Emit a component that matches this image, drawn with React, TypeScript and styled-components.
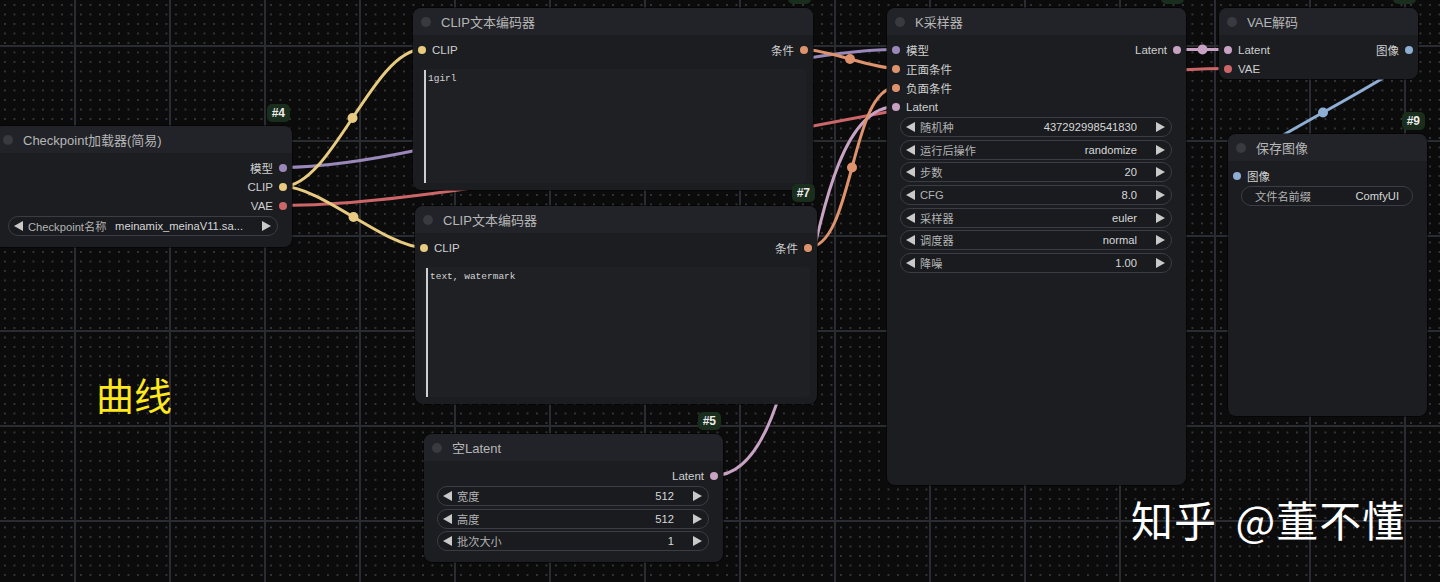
import React from 'react';
import styled, { createGlobalStyle } from 'styled-components';

const Global = createGlobalStyle`
  html, body { margin: 0; padding: 0; background: #0b0b0b; }
  body {
    width: 1440px; height: 582px; overflow: hidden;
    font-family: "Liberation Sans", Arial, "Noto Sans CJK SC", sans-serif;
    -webkit-font-smoothing: antialiased;
  }
`;

const C = {
  clip: '#e8cb80',
  model: '#9a88bb',
  vae: '#cc6668',
  cond: '#df936d',
  latent: '#c8a2c3',
  image: '#8eaed3',
};

const TITLE_H = 27;
const BODY_PAD = 5;
const ROW_H = 19;

const Canvas = styled.div`
  position: relative;
  width: 1440px;
  height: 582px;
  overflow: hidden;
  background-color: #0b0b0b;
  background-image:
    linear-gradient(to right, #2a2c31 0, #2a2c31 2px, transparent 2px),
    linear-gradient(to bottom, #2a2c31 0, #2a2c31 2px, transparent 2px),
    radial-gradient(circle at 1px 1px, #34353a 0.8px, transparent 1.3px);
  background-size: 95px 95px, 95px 95px, 9.5px 9.5px;
  background-position: 74px 0, 0 45px, 4px 4px;
`;

const LinkLayer = styled.svg`
  position: absolute;
  left: 0;
  top: 0;
  width: 1440px;
  height: 582px;
`;

const NodeBox = styled.div<{ $x: number; $y: number; $w: number; $h: number }>`
  position: absolute;
  left: ${(p) => p.$x}px;
  top: ${(p) => p.$y}px;
  width: ${(p) => p.$w}px;
  height: ${(p) => p.$h}px;
  background: #1b1d21;
  border-radius: 8px;
  display: flex;
  flex-direction: column;
  box-shadow: 0 0 0 1px rgba(0, 0, 0, 0.5);
`;

const Badge = styled.div`
  position: absolute;
  right: 2px;
  bottom: calc(100% + 4px);
  height: 18px;
  padding: 0 5px;
  border-radius: 5px;
  background: #1a2e1d;
  color: #ececec;
  font-size: 12px;
  font-weight: bold;
  display: flex;
  align-items: center;
`;

const TitleBar = styled.div`
  flex: none;
  height: ${TITLE_H}px;
  display: flex;
  align-items: center;
  padding-left: 8px;
  gap: 10px;
  background: #212328;
  border-radius: 8px 8px 0 0;
  color: #b6b6b6;
  font-size: 13px;
  white-space: nowrap;
`;

const TitleDot = styled.span`
  width: 10px;
  height: 10px;
  border-radius: 50%;
  background: #383a40;
  flex: none;
`;

const Body = styled.div`
  flex: 1;
  display: flex;
  flex-direction: column;
  padding-top: ${BODY_PAD}px;
  min-height: 0;
`;

const SlotRow = styled.div`
  height: ${ROW_H}px;
  display: flex;
  align-items: center;
  justify-content: space-between;
  padding: 0 5px;
  font-size: 11.5px;
  color: #cfcfcf;
  white-space: nowrap;
`;

const SlotSide = styled.div<{ $out?: boolean }>`
  display: flex;
  align-items: center;
  gap: 6px;
  flex-direction: ${(p) => (p.$out ? 'row-reverse' : 'row')};
`;

const SlotDot = styled.span<{ $c: string }>`
  width: 8px;
  height: 8px;
  border-radius: 50%;
  background: ${(p) => p.$c};
  flex: none;
`;

const Widgets = styled.div`
  display: flex;
  flex-direction: column;
  gap: 2.7px;
  margin-top: 1px;
`;

const Widget = styled.div<{ $plain?: boolean }>`
  height: 20px;
  box-sizing: border-box;
  margin: 0 14px 0 13px;
  border: 1px solid #3a3d43;
  border-radius: 10px;
  background: #191b1f;
  display: flex;
  align-items: center;
  padding: ${(p) => (p.$plain ? '0 13px' : '0 6px 0 5px')};
  font-size: 11.2px;
  white-space: nowrap;
`;

const WLabel = styled.span<{ $plain?: boolean }>`
  color: #b4b4b4;
  margin-left: ${(p) => (p.$plain ? '0' : '5px')};
  flex: none;
`;

const WValue = styled.span<{ $plain?: boolean }>`
  color: #d8d8d8;
  flex: 1;
  text-align: right;
  margin-right: ${(p) => (p.$plain ? '0' : '19px')};
  margin-left: 6px;
`;

const TextArea = styled.div`
  flex: 1;
  margin: 10px 7px 7px 8px;
  background: #1e2024;
  border-radius: 3px;
  display: flex;
  padding: 1px 0 0 3px;
  font-family: "Liberation Mono", "DejaVu Sans Mono", monospace;
  font-size: 9.5px;
  color: #d2d2d2;
`;

const Caret = styled.span`
  width: 2px;
  background: #cfcfcf;
  flex: none;
  margin-right: 2px;
`;

const AreaText = styled.span`
  padding-top: 3px;
`;

const Note = styled.div`
  position: absolute;
  left: 96px;
  top: 375px;
  font-family: "Noto Sans CJK SC", sans-serif;
  font-size: 38px;
  line-height: 1;
  color: #ffe81c;
`;

const Watermark = styled.div`
  position: absolute;
  left: 1131px;
  top: 498px;
  font-family: "Noto Sans CJK SC", sans-serif;
  font-size: 42px;
  font-weight: 400;
  letter-spacing: 1px;
  word-spacing: 8px;
  line-height: 1;
  color: #ffffff;
  white-space: nowrap;
`;

const Tri = ({ dir }: { dir: 'l' | 'r' }) => (
  <svg width="9" height="10" viewBox="0 0 9 10" style={{ flex: 'none' }}>
    <path d={dir === 'l' ? 'M9 0 L0 5 L9 10 Z' : 'M0 0 L9 5 L0 10 Z'} fill="#c9c9c9" />
  </svg>
);

type Slot = [string, string];
type Row = { in?: Slot; out?: Slot };
type W = { label: string; value: string; plain?: boolean };
type NodeDef = {
  id: number;
  title: string;
  x: number;
  y: number;
  w: number;
  h: number;
  rows: Row[];
  widgets?: W[];
  text?: string;
};

const nodes: NodeDef[] = [
  {
    id: 4,
    title: 'Checkpoint加载器(简易)',
    x: -5, y: 126, w: 297, h: 121,
    rows: [{ out: ['模型', C.model] }, { out: ['CLIP', C.clip] }, { out: ['VAE', C.vae] }],
    widgets: [{ label: 'Checkpoint名称', value: 'meinamix_meinaV11.sa...' }],
  },
  {
    id: 6,
    title: 'CLIP文本编码器',
    x: 413, y: 8, w: 400, h: 182,
    rows: [{ in: ['CLIP', C.clip], out: ['条件', C.cond] }],
    text: '1girl',
  },
  {
    id: 7,
    title: 'CLIP文本编码器',
    x: 415, y: 206, w: 402, h: 198,
    rows: [{ in: ['CLIP', C.clip], out: ['条件', C.cond] }],
    text: 'text, watermark',
  },
  {
    id: 5,
    title: '空Latent',
    x: 424, y: 434, w: 299, h: 128,
    rows: [{ out: ['Latent', C.latent] }],
    widgets: [
      { label: '宽度', value: '512' },
      { label: '高度', value: '512' },
      { label: '批次大小', value: '1' },
    ],
  },
  {
    id: 3,
    title: 'K采样器',
    x: 887, y: 8, w: 299, h: 477,
    rows: [
      { in: ['模型', C.model], out: ['Latent', C.latent] },
      { in: ['正面条件', C.cond] },
      { in: ['负面条件', C.cond] },
      { in: ['Latent', C.latent] },
    ],
    widgets: [
      { label: '随机种', value: '437292998541830' },
      { label: '运行后操作', value: 'randomize' },
      { label: '步数', value: '20' },
      { label: 'CFG', value: '8.0' },
      { label: '采样器', value: 'euler' },
      { label: '调度器', value: 'normal' },
      { label: '降噪', value: '1.00' },
    ],
  },
  {
    id: 8,
    title: 'VAE解码',
    x: 1219, y: 8, w: 199, h: 71,
    rows: [{ in: ['Latent', C.latent], out: ['图像', C.image] }, { in: ['VAE', C.vae] }],
  },
  {
    id: 9,
    title: '保存图像',
    x: 1228, y: 134, w: 199, h: 282,
    rows: [{ in: ['图像', C.image] }],
    widgets: [{ label: '文件名前缀', value: 'ComfyUI', plain: true }],
  },
];

const byId = (id: number) => nodes.find((n) => n.id === id)!;
const slotPos = (id: number, row: number, out: boolean): [number, number] => {
  const n = byId(id);
  const x = out ? n.x + n.w - 9 : n.x + 9;
  const y = n.y + TITLE_H + BODY_PAD + ROW_H / 2 + row * ROW_H;
  return [x, y];
};

type LinkDef = { from: [number, number]; to: [number, number]; color: string };
const links: LinkDef[] = [
  { from: [4, 2], to: [8, 1], color: C.vae },
  { from: [4, 0], to: [3, 0], color: C.model },
  { from: [5, 0], to: [3, 3], color: C.latent },
  { from: [4, 1], to: [6, 0], color: C.clip },
  { from: [4, 1], to: [7, 0], color: C.clip },
  { from: [6, 0], to: [3, 1], color: C.cond },
  { from: [7, 0], to: [3, 2], color: C.cond },
  { from: [3, 0], to: [8, 0], color: C.latent },
  { from: [8, 0], to: [9, 0], color: C.image },
];

const Link = ({ l }: { l: LinkDef }) => {
  const [x1, y1] = slotPos(l.from[0], l.from[1], true);
  const [x2, y2] = slotPos(l.to[0], l.to[1], false);
  const dist = Math.hypot(x2 - x1, y2 - y1);
  const o = dist * 0.25;
  const c1x = x1 + o;
  const c2x = x2 - o;
  const mx = 0.125 * x1 + 0.375 * c1x + 0.375 * c2x + 0.125 * x2;
  const my = (y1 + y2) / 2;
  return (
    <g>
      <path
        d={`M${x1} ${y1} C${c1x} ${y1} ${c2x} ${y2} ${x2} ${y2}`}
        stroke={l.color}
        strokeWidth={3}
        fill="none"
        strokeLinecap="round"
      />
      <circle cx={mx} cy={my} r={5} fill={l.color} />
    </g>
  );
};

const Node = ({ n }: { n: NodeDef }) => (
  <NodeBox $x={n.x} $y={n.y} $w={n.w} $h={n.h}>
    <Badge>#{n.id}</Badge>
    <TitleBar>
      <TitleDot />
      <span>{n.title}</span>
    </TitleBar>
    <Body>
      {n.rows.map((r, i) => (
        <SlotRow key={i}>
          <SlotSide>
            {r.in && (
              <>
                <SlotDot $c={r.in[1]} />
                <span>{r.in[0]}</span>
              </>
            )}
          </SlotSide>
          <SlotSide $out>
            {r.out && (
              <>
                <SlotDot $c={r.out[1]} />
                <span>{r.out[0]}</span>
              </>
            )}
          </SlotSide>
        </SlotRow>
      ))}
      {n.widgets && (
        <Widgets>
          {n.widgets.map((w, i) => (
            <Widget key={i} $plain={w.plain}>
              {!w.plain && <Tri dir="l" />}
              <WLabel $plain={w.plain}>{w.label}</WLabel>
              <WValue $plain={w.plain}>{w.value}</WValue>
              {!w.plain && <Tri dir="r" />}
            </Widget>
          ))}
        </Widgets>
      )}
      {n.text !== undefined && (
        <TextArea>
          <Caret />
          <AreaText>{n.text}</AreaText>
        </TextArea>
      )}
    </Body>
  </NodeBox>
);

export default function App() {
  return (
    <>
      <Global />
      <Canvas>
        <LinkLayer viewBox="0 0 1440 582">
          {links.map((l, i) => (
            <Link key={i} l={l} />
          ))}
        </LinkLayer>
        {nodes.map((n) => (
          <Node key={n.id} n={n} />
        ))}
        <Note>曲线</Note>
        <Watermark>知乎 @董不懂</Watermark>
      </Canvas>
    </>
  );
}
